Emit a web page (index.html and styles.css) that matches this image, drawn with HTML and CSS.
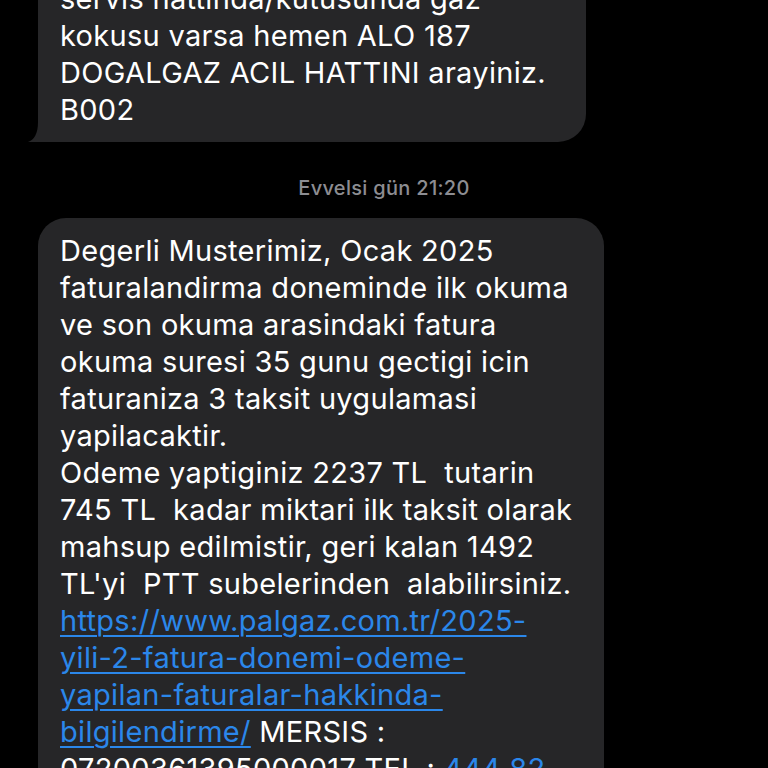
FILE: index.html
```html
<!DOCTYPE html>
<html lang="tr">
<head>
<meta charset="utf-8">
<title>Mesajlar</title>
<link rel="stylesheet" href="styles.css">
</head>
<body>
<div class="chat">
  <div class="bubble bubble-first">
    <div class="text">servis hattinda/kutusunda gaz<br>kokusu varsa hemen ALO 187<br>DOGALGAZ ACIL HATTINI arayiniz.<br>B002</div>
    <svg class="tail" width="16" height="20" viewBox="0 0 16 20"><path d="M16 0 L16 20 L0 20 C6 18 10 12 10 0 Z" fill="#262628"/></svg>
  </div>
  <div class="stamp">Evvelsi gün 21:20</div>
  <div class="bubble bubble-second">
    <div class="text">Degerli Musterimiz, Ocak 2025<br>faturalandirma doneminde ilk okuma<br>ve son okuma arasindaki fatura<br>okuma suresi 35 gunu gectigi icin<br>faturaniza 3 taksit uygulamasi<br>yapilacaktir.<br>Odeme yaptiginiz 2237 TL  tutarin<br>745 TL  kadar miktari ilk taksit olarak<br>mahsup edilmistir, geri kalan 1492<br>TL'yi  PTT subelerinden  alabilirsiniz.<br><a class="link" href="#">https://www.palgaz.com.tr/2025-<br>yili-2-fatura-donemi-odeme-<br>yapilan-faturalar-hakkinda-<br>bilgilendirme/</a> MERSIS :<br>07200361395000017 TEL : <a class="link" href="#">444 82</a></div>
  </div>
</div>
</body>
</html>
```
FILE: styles.css
```css
html, body {
  margin: 0;
  padding: 0;
  background: #000;
  height: 768px;
  overflow: hidden;
}
.chat {
  display: flex;
  flex-direction: column;
  align-items: flex-start;
  padding-left: 38px;
  font-family: Inter, "Noto Sans", "Liberation Sans", sans-serif;
}
.bubble {
  position: relative;
  background: #262628;
  border-radius: 28px;
  padding: 14px 22px;
  box-sizing: border-box;
  color: #fff;
}
.bubble-first {
  width: 548px;
  margin-top: -34px;
  border-bottom-left-radius: 0;
}
.bubble-second {
  width: 566px;
  margin-top: 18px;
}
.text {
  font-size: 29px;
  line-height: 37px;
  white-space: pre;
  letter-spacing: 0.3px;
}
.tail {
  position: absolute;
  left: -10px;
  bottom: 0;
}
.stamp {
  align-self: stretch;
  margin-left: -38px;
  margin-top: 34px;
  text-align: center;
  font-size: 20px;
  line-height: 24px;
  letter-spacing: 0.3px;
  color: #8d8d92;
  font-weight: 500;
}
.link {
  color: #2b87ea;
  text-decoration: underline;
  text-decoration-thickness: 2px;
  text-underline-offset: 4px;
}
```
